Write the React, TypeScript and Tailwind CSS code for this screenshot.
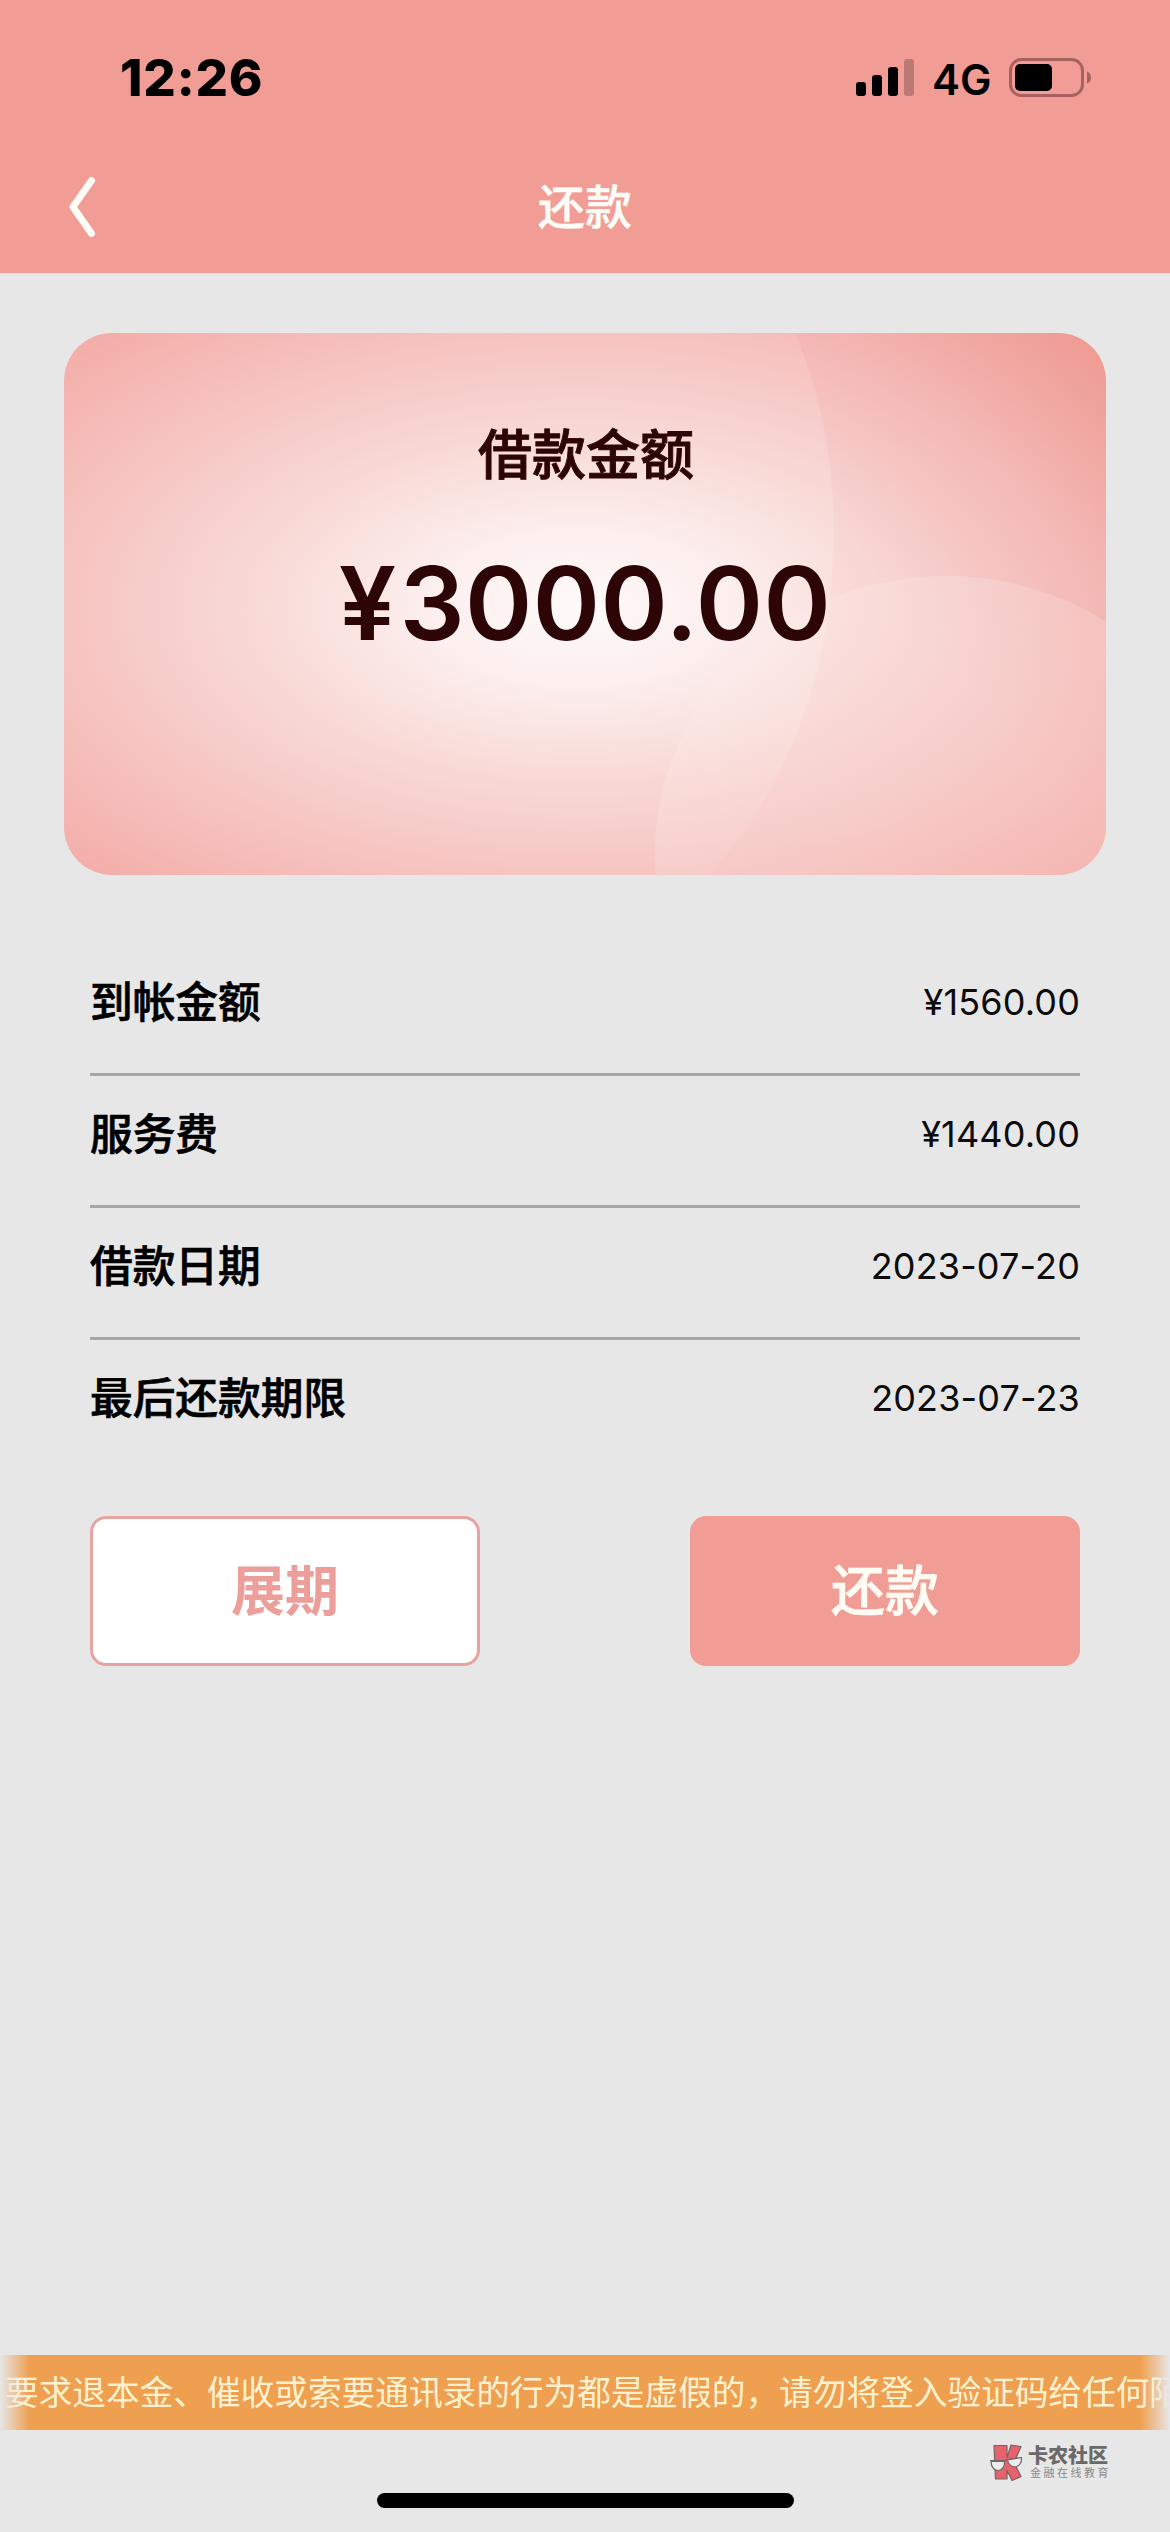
import type { ReactNode } from "react";

type Detail = {
  label: string;
  value: string;
};

const details: Detail[] = [
  { label: "到帐金额", value: "¥1560.00" },
  { label: "服务费", value: "¥1440.00" },
  { label: "借款日期", value: "2023-07-20" },
  { label: "最后还款期限", value: "2023-07-23" },
];

const NOTICE =
  "要求退本金、催收或索要通讯录的行为都是虚假的，请勿将登入验证码给任何陌";

function StatusBar() {
  return (
    <div className="flex h-[141px] items-start justify-between pt-[48px] pr-[78px] pl-[120px] text-black">
      <span className="text-[51px] leading-[60px] font-extrabold tracking-[0.8px]">12:26</span>

      <div className="flex h-[60px] items-center">
        <svg width="60" height="40" viewBox="0 0 60 40">
          <rect x="1" y="24" width="10" height="14" rx="3" />
          <rect x="17" y="17" width="10" height="21" rx="3" />
          <rect x="33" y="9" width="10" height="29" rx="3" />
          <rect x="49" y="1" width="10" height="37" rx="3" fillOpacity="0.22" />
        </svg>
        <span className="mt-[3px] ml-[17px] w-[60px] text-[42px] leading-none font-semibold">4G</span>
        <svg className="ml-[16px]" width="84" height="42" viewBox="0 0 84 42">
          <rect x="2.5" y="2.5" width="72" height="36" rx="11" fill="none" stroke="#a5625e" strokeWidth="3" />
          <rect x="7" y="7" width="37" height="27" rx="5" />
          <path d="M79 14.500c3 1 4 3.500 4 6s-1 5-4 6z" fill="#a5625e" />
        </svg>
      </div>
    </div>
  );
}

function NavBar({ title }: { title: string }) {
  return (
    <div className="grid h-[132px] grid-cols-[200px_1fr_200px] items-center">
      <button aria-label="返回" className="pl-[67px]">
        <svg width="30" height="64" viewBox="0 0 30 64" fill="none" stroke="#fffdf8" strokeWidth="7" strokeLinecap="round" strokeLinejoin="round">
          <path d="M24.500 5.500 6 32 24.500 58.500" />
        </svg>
      </button>
      <h1 className="text-center text-[47px] leading-[60px] font-medium text-[#fffdf8] [-webkit-text-stroke:0.4px]">{title}</h1>
    </div>
  );
}

function AmountCard() {
  return (
    <section className="relative mx-[64px] mt-[60px] h-[542px] overflow-hidden rounded-[48px] text-[#2d0507]">
      {/* Card artwork */}
      <svg className="absolute inset-0" width="1042" height="542" viewBox="0 0 1042 542">
        <defs>
          <radialGradient id="glow" gradientUnits="userSpaceOnUse" cx="0" cy="0" r="1" gradientTransform="translate(515 275) scale(735 385)">
            <stop offset="0" stopColor="#fefaf8" />
            <stop offset="0.2" stopColor="#fcefee" />
            <stop offset="0.45" stopColor="#f8d9d6" />
            <stop offset="0.7" stopColor="#f6c4c1" />
            <stop offset="1" stopColor="#f4aaa5" />
          </radialGradient>
          <linearGradient id="shade" x1="1" y1="0" x2="0.2" y2="0.9">
            <stop offset="0" stopColor="#ea8b80" stopOpacity="0.55" />
            <stop offset="0.3" stopColor="#ec9590" stopOpacity="0.26" />
            <stop offset="0.6" stopColor="#ee9a98" stopOpacity="0.09" />
            <stop offset="1" stopColor="#f0a09c" stopOpacity="0.1" />
          </linearGradient>
          <linearGradient id="bubble" x1="0.1" y1="0.1" x2="0.7" y2="0.7">
            <stop offset="0" stopColor="#fdf0ee" stopOpacity="0.25" />
            <stop offset="1" stopColor="#f9ded8" stopOpacity="0.22" />
          </linearGradient>
        </defs>
        <rect width="1042" height="542" fill="url(#glow)" />
        <path d="M731 0C762 75 772 145 769 220C766 345 720 460 645 542H1042V0z" fill="url(#shade)" />
        <ellipse cx="882" cy="520" rx="291" ry="277" fill="url(#bubble)" />
      </svg>

      <div className="relative flex flex-col items-center">
        <h2 className="mt-[83px] pl-[2px] text-[54px] leading-[80px] font-medium [-webkit-text-stroke:0.9px]">借款金额</h2>
        <p className="mt-[47px] text-[102px] leading-[120px] font-[560] tracking-[0.5px]">
          <span className="mr-[3px]">¥</span>3000.00
        </p>
      </div>
    </section>
  );
}

function DetailRow({ label, value }: Detail) {
  return (
    <li className="flex h-[132px] items-center justify-between border-b-[3px] border-[#a7a7a7] pb-[14px] last:border-transparent">
      <span className="pt-[2px] text-[42.7px] leading-[60px] font-medium text-black [-webkit-text-stroke:0.7px]">{label}</span>
      <span className="text-[36px] leading-[60px] tracking-[0.15px] text-[#0c0c0c]">{value}</span>
    </li>
  );
}

function ActionButton({ children, outline }: { children: ReactNode; outline?: boolean }) {
  return (
    <button
      className={`h-[150px] w-[390px] rounded-[16px] pt-[2px] text-[54px] leading-[80px] ${
        outline
          ? "border-[3px] border-[#e6a3a0] bg-white font-bold text-[#ec9f9a]"
          : "bg-[#f19d96] font-medium text-[#fffdf3] [-webkit-text-stroke:0.7px]"
      }`}
    >
      {children}
    </button>
  );
}

function Brand() {
  return (
    <div className="flex h-[37px] items-center gap-[4px] pl-[989px]">
      <svg width="35" height="37" viewBox="0 0 35 37" stroke="#716668" strokeWidth="1.200" strokeLinejoin="round">
        <path d="M5 1.500h13v12L22 1l10 1.500-7 16 7 14-9 4-5-10v8.500H6.500z" fill="#e9616d" />
        <path d="M1 16.500h15l2-1 15-2" fill="none" />
        <path d="M2 17.500h13.500c1 11-13 13-13.500 0z" fill="#ececec" />
        <path d="M18.500 16l14-2.500c1 11-12 13-14 2.500z" fill="#ececec" />
      </svg>
      <div className="flex flex-col">
        <span className="text-[20px] leading-[21px] font-black text-[#696969]">卡农社区</span>
        <span className="ml-[2px] text-[11px] leading-[13px] tracking-[2.500px] text-[#8a8a8a]">金融在线教育</span>
      </div>
    </div>
  );
}

export default function App() {
  return (
    <div className="flex h-[2532px] w-[1170px] flex-col overflow-hidden bg-[#e7e7e7] font-[Inter,'Noto_Sans_CJK_SC',sans-serif]">
      <header className="h-[273px] bg-[#f19d96]">
        <StatusBar />
        <NavBar title="还款" />
      </header>

      <AmountCard />

      <ul className="mx-[90px] mt-[69px]">
        {details.map((item) => (
          <DetailRow key={item.label} {...item} />
        ))}
      </ul>

      <div className="mx-[90px] mt-[44px] flex justify-between">
        <ActionButton outline>展期</ActionButton>
        <ActionButton>还款</ActionButton>
      </div>

      {/* Scrolling notice, faded out at both edges */}
      <div className="relative mt-auto h-[75px] shrink-0 overflow-hidden bg-[#ef9f50]">
        <p className="ml-[5px] text-[33.67px] leading-[75px] font-normal whitespace-nowrap text-[#fdf2d0]">{NOTICE}</p>
        <div className="absolute inset-y-0 left-0 w-[30px] bg-linear-to-r from-[#e7e7e7] to-[#e7e7e7]/0" />
        <div className="absolute inset-y-0 right-0 w-[30px] bg-linear-to-l from-[#e7e7e7] to-[#e7e7e7]/0" />
      </div>

      <footer className="h-[102px] shrink-0 pt-[14px]">
        <Brand />
        <div className="mx-auto mt-[12px] h-[15px] w-[417px] rounded-full bg-black" />
      </footer>
    </div>
  );
}
